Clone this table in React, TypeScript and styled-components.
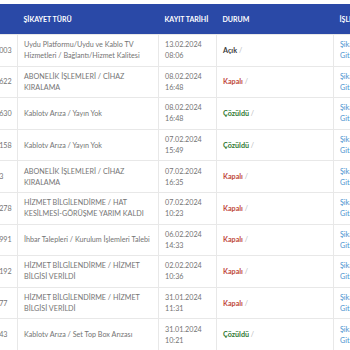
import styled, { createGlobalStyle } from "styled-components";
import { FC } from "react";

type Status = "open" | "closed" | "solved";

interface IComplaint {
  id: string;
  type: string;
  date: string;
  time: string;
  status: Status;
}

const STATUS_LABEL: Record<Status, string> = {
  open: "Açık",
  closed: "Kapalı",
  solved: "Çözüldü",
};

const STATUS_COLOR: Record<Status, string> = {
  open: "#3a3a3a",
  closed: "#c0493b",
  solved: "#2f7a34",
};

const complaints: IComplaint[] = [
  { id: "6912401003", type: "Uydu Platformu/Uydu ve Kablo TV Hizmetleri / Bağlantı/Hizmet Kalitesi", date: "13.02.2024", time: "08:06", status: "open" },
  { id: "6897331622", type: "ABONELİK İŞLEMLERİ / CİHAZ KIRALAMA", date: "08.02.2024", time: "16:48", status: "closed" },
  { id: "6897331630", type: "Kablotv Arıza / Yayın Yok", date: "08.02.2024", time: "16:48", status: "solved" },
  { id: "6891208158", type: "Kablotv Arıza / Yayın Yok", date: "07.02.2024", time: "15:49", status: "solved" },
  { id: "68912113", type: "ABONELİK İŞLEMLERİ / CİHAZ KIRALAMA", date: "07.02.2024", time: "16:35", status: "closed" },
  { id: "6889044278", type: "HİZMET BİLGİLENDİRME / HAT KESİLMESİ-GÖRÜŞME YARIM KALDI", date: "07.02.2024", time: "10:23", status: "closed" },
  { id: "6885120991", type: "İhbar Talepleri / Kurulum İşlemleri Talebi", date: "06.02.2024", time: "14:33", status: "closed" },
  { id: "6869031192", type: "HİZMET BİLGİLENDİRME / HİZMET BİLGİSİ VERİLDİ", date: "02.02.2024", time: "10:36", status: "closed" },
  { id: "686110577", type: "HİZMET BİLGİLENDİRME / HİZMET BİLGİSİ VERİLDİ", date: "31.01.2024", time: "11:31", status: "closed" },
  { id: "686101043", type: "Kablotv Arıza / Set Top Box Arızası", date: "31.01.2024", time: "10:21", status: "solved" },
];

const GlobalStyle = createGlobalStyle`
  html, body {
    margin: 0;
    padding: 0;
    background: #ffffff;
    overflow: hidden;
  }
  body {
    font-family: Lato, "Open Sans", sans-serif;
  }
`;

const App: FC = () => {
  return (
    <>
      <GlobalStyle />
      <Wrapper>
        <Table>
          <colgroup>
            <col style={{ width: 54 }} />
            <col style={{ width: 141 }} />
            <col style={{ width: 58 }} />
            <col style={{ width: 117 }} />
            <col style={{ width: 42 }} />
          </colgroup>
          <thead>
            <tr>
              <Th>KAYIT</Th>
              <Th>ŞİKAYET TÜRÜ</Th>
              <Th>KAYIT TARİHİ</Th>
              <Th>DURUM</Th>
              <Th>İŞLEM</Th>
            </tr>
          </thead>
          <tbody>
            {complaints.map((c) => (
              <Row key={c.id}>
                <Td>{c.id}</Td>
                <Td>{c.type}</Td>
                <Td>
                  <Line>{c.date}</Line>
                  <Line>{c.time}</Line>
                </Td>
                <Td>
                  <State colors={STATUS_COLOR[c.status]}>{STATUS_LABEL[c.status]}</State>
                  <Slash> /</Slash>
                </Td>
                <Td>
                  <Link href="#">Şikayete Git</Link>
                </Td>
              </Row>
            ))}
          </tbody>
        </Table>
      </Wrapper>
    </>
  );
};

export default App;

// the table is scrolled sideways in the original, so its first column is cut at the left edge
const Wrapper = styled.div`
  padding-top: 4px;
  margin-left: -37px;
  width: 420px;
`;

const Table = styled.table`
  border-collapse: collapse;
  table-layout: fixed;
  width: 412px;
  font-size: 7.2px;
  color: #747474;
`;

const Th = styled.th`
  height: 30px;
  padding: 0 6px;
  background: #2a49a7;
  color: #ffffff;
  font-size: 7px;
  font-weight: 700;
  text-align: left;
  white-space: nowrap;
  overflow: hidden;
`;

const Row = styled.tr`
  height: 31.6px;
`;

const Td = styled.td`
  padding: 3px 6px;
  line-height: 11px;
  border: 1px solid #e8e8e8;
  vertical-align: middle;
  overflow: hidden;
`;

const Line = styled.div``;

const State = styled.span<{ colors: string }>`
  color: ${(props) => props.colors};
  font-weight: 700;
`;

const Slash = styled.span`
  color: #b8b8b8;
`;

const Link = styled.a`
  color: #4a93cf;
  text-decoration: none;
`;
